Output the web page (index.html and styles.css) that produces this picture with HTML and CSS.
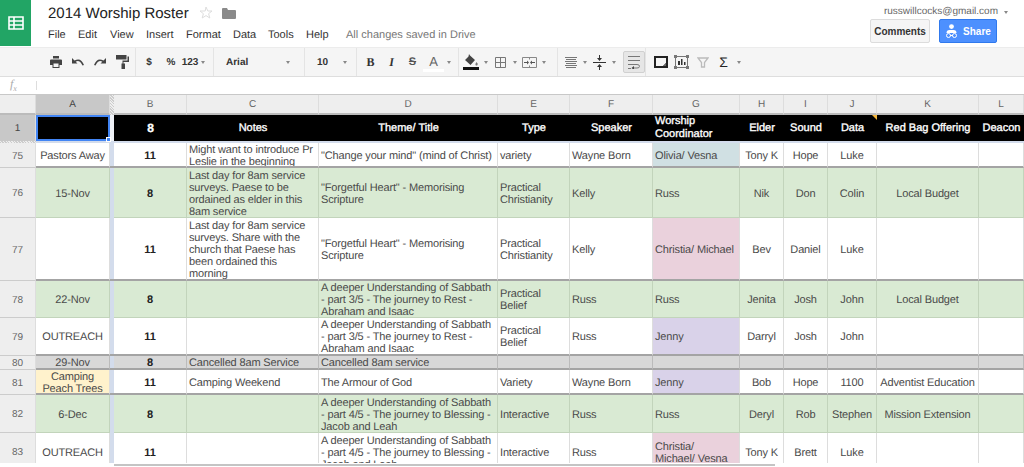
FILE: index.html

```html
<!DOCTYPE html>
<html lang="en">
<head>
    <meta charset="UTF-8">
    <title>2014 Worship Roster</title>
    <link rel="stylesheet" href="styles.css">
</head>
<body>
    <header class="topbar">
        <div class="logo">
            <svg width="16" height="14" viewBox="0 0 16 14"><path fill="none" stroke="#fff" stroke-width="1.6" d="M1 1h14v12H1zM1 5h14M1 9h14M6 1v12"/></svg>
        </div>
        <div class="doc">
            <div class="doc-title">
                <span class="title">2014 Worship Roster</span>
                <svg class="star" width="14" height="14" viewBox="0 0 14 14"><path fill="none" stroke="#ddd" d="M7 1l1.800 4H13L9.600 7.700 10.800 12 7 9.600 3.200 12l1.200-4.300L1 5h5.200z"/></svg>
                <svg class="folder" width="14" height="11" viewBox="0 0 14 11"><path fill="#8a8a8a" d="M0 1q0-1 1-1h4l1 2h7q1 0 1 1v7q0 1-1 1H1q-1 0-1-1z"/></svg>
            </div>
            <nav class="menu">
                <a class="m-file">File</a>
                <a class="m-edit">Edit</a>
                <a class="m-view">View</a>
                <a class="m-insert">Insert</a>
                <a class="m-format">Format</a>
                <a class="m-data">Data</a>
                <a class="m-tools">Tools</a>
                <a class="m-help">Help</a>
                <span class="saved">All changes saved in Drive</span>
            </nav>
        </div>
        <div class="account">
            <div class="email">russwillcocks@gmail.com<i class="caret"></i></div>
            <div class="buttons">
                <button class="btn">Comments</button>
                <button class="btn share">
                    <svg width="13" height="14" viewBox="0 0 13 14"><circle cx="6.500" cy="2.600" r="2.400" fill="#fff"/><path fill="#fff" d="M1.500 9q0-3 3-3h4q3 0 3 3z"/><g fill="none" stroke="#fff"><circle cx="3.500" cy="11.500" r="2"/><circle cx="9.500" cy="11.500" r="2"/></g><path stroke="#fff" d="M5 11.500h3"/></svg>
                    Share
                </button>
            </div>
        </div>
    </header>

    <div class="toolbar">
        <div class="group g-history">
            <span class="tool"><svg width="12" height="12" viewBox="0 0 12 12"><path fill="#444" fill-rule="evenodd" d="M3 0h6v2.500H3zM1 3.500h10q1 0 1 1V9H9.500v3h-7V9H0V4.500q0-1 1-1zM3.500 7.500v3.500h5V7.500z"/></svg></span>
            <span class="tool"><svg width="12" height="8" viewBox="0 0 12 8"><path fill="#444" d="M0 0v5.500h5.500L3.700 3.700Q7.500 1.500 10.500 7.500L12 7Q9-1 2.500 2.500z"/></svg></span>
            <span class="tool"><svg width="12" height="8" viewBox="0 0 12 8"><path fill="#444" d="M12 0v5.500H6.500l1.800-1.800Q4.500 1.500 1.500 7.500L0 7Q3-1 9.500 2.500z"/></svg></span>
            <span class="tool"><svg width="13" height="14" viewBox="0 0 13 14"><path fill="#444" d="M0 0h10.500v4.500H0zM11.500 1.500H13V7H7.500v1.500H9V14H5.500V8.500H6.500V5.500h5z"/></svg></span>
        </div>
        <div class="group g-number">
            <span class="tool txt">$</span>
            <span class="tool txt">%</span>
            <span class="tool txt w16">123</span>
            <i class="caret"></i>
        </div>
        <div class="group g-font">
            <span class="txt">Arial</span>
            <i class="caret"></i>
        </div>
        <div class="group g-size">
            <span class="txt">10</span>
            <i class="caret"></i>
        </div>
        <div class="group g-style">
            <span class="tool w21 serif">B</span>
            <span class="tool w21 serif ital">I</span>
            <span class="tool w21 strike">S</span>
            <span class="tool w21 text-color">A</span>
            <i class="caret"></i>
        </div>
        <div class="group g-cell">
            <span class="tool w20"><svg width="18" height="17" viewBox="0 0 18 17"><path fill="#444" d="M7 0l1 1.500L13 6l-4.500 5L3 6l3.500-3.500z"/><path fill="#777" d="M14.500 8q2 2 1 3t-2 0q-.5-1 1-3z"/><path fill="#111" d="M1 13h16v3H1z"/></svg></span>
            <i class="caret"></i>
            <span class="tool w20"><svg width="11" height="11" viewBox="0 0 11 11"><path fill="none" stroke="#777" d="M.5.5h10v10H.5zM.5 5.500h10M5.500.5v10"/></svg></span>
            <i class="caret"></i>
            <span class="tool w20"><svg width="15" height="11" viewBox="0 0 15 11"><path fill="none" stroke="#888" d="M.5.5h14v10H.5zM7.500.5v2M7.500 8.500v2"/><path fill="#555" d="M2 5h3V3.500L7 5.500 5 7.500V6H2zM13 5h-3V3.500L8 5.500l2 2V6h3z"/></svg></span>
            <i class="caret"></i>
        </div>
        <div class="group g-align">
            <span class="tool w20"><svg width="12" height="11" viewBox="0 0 12 11"><path stroke="#777" d="M0 .5h12M1 2.500h10M0 4.500h12M1 6.500h10M0 8.500h12M1 10.500h10"/></svg></span>
            <i class="caret"></i>
            <span class="tool w20"><svg width="13" height="15" viewBox="0 0 13 15"><path fill="#333" d="M0 7h13v1H0zM6 0h1v3h2L6.500 6 4 3h2zM4 12l2.500-3L9 12H7v3H6v-3z"/></svg></span>
            <i class="caret"></i>
            <span class="wrap-btn"><svg width="12" height="13" viewBox="0 0 12 13"><path stroke="#777" fill="none" d="M0 .5h12M0 4.500h12M0 8.500h9q2.500 0 2.500 1.800T9 12H5M0 12.500h3"/><path fill="#444" d="M6 10v4l-2.500-2z"/></svg></span>
        </div>
        <div class="group g-insert">
            <span class="tool w21"><svg width="14" height="12" viewBox="0 0 14 12"><path fill="#222" fill-rule="evenodd" d="M0 0h14v12H0zM2 2v8h7l3-3V2z"/><path fill="#666" d="M9 10l3-3v3z"/></svg></span>
            <span class="tool w21"><svg width="15" height="14" viewBox="0 0 15 14"><path fill="none" stroke="#777" d="M1.500 1.500h12v11h-12z"/><path fill="#777" d="M0 0h3v3H0zM12 0h3v3h-3zM0 11h3v3H0zM12 11h3v3h-3z"/><path fill="#333" d="M4 6h2v4H4zM7 4h1.500v6H7zM10 7h1.500v3H10z"/></svg></span>
            <span class="tool w21"><svg width="12" height="11" viewBox="0 0 12 11"><path fill="none" stroke="#bbb" stroke-width="1.300" d="M1 1h10L7.500 5.500V10h-3V5.500z"/></svg></span>
            <span class="tool w21 sigma">&Sigma;</span>
            <i class="caret"></i>
        </div>
    </div>

    <div class="formula">
        <span class="fx">f<sub>x</sub></span>
        <span class="fx-sep"></span>
    </div>

    <div class="sheet">
        <div class="row col-heads">
            <div class="corner"></div>
            <div class="ch sel">A</div>
            <div class="gap hatch"></div>
            <div class="ch">B</div><div class="ch">C</div><div class="ch">D</div><div class="ch">E</div><div class="ch">F</div><div class="ch">G</div><div class="ch">H</div><div class="ch">I</div><div class="ch">J</div><div class="ch">K</div><div class="ch">L</div>
        </div>
        <div class="row frozen">
            <div class="rh sel">1</div>
            <div class="c active"><i class="handle"></i></div>
            <div class="gap"></div>
            <div class="c ctr strong">8</div>
            <div class="c ctr">Notes</div>
            <div class="c ctr">Theme/ Title</div>
            <div class="c ctr">Type</div>
            <div class="c ctr">Speaker</div>
            <div class="c">Worship Coordinator</div>
            <div class="c ctr">Elder</div>
            <div class="c ctr">Sound</div>
            <div class="c ctr note">Data</div>
            <div class="c ctr">Red Bag Offering</div>
            <div class="c ctr">Deacon</div>
        </div>
        <div class="freeze-line">
            <div class="hatch"></div>
        </div>
        <div class="rows">
            <div class="row h25 thick">
                <div class="rh">75</div>
                <div class="c ctr">Pastors Away</div>
                <div class="gap"></div>
                <div class="c ctr num">11</div>
                <div class="c">Might want to introduce Pr Leslie in the beginning</div>
                <div class="c">"Change your mind" (mind of Christ)</div>
                <div class="c">variety</div>
                <div class="c">Wayne Born</div>
                <div class="c blue">Olivia/ Vesna</div>
                <div class="c ctr">Tony K</div>
                <div class="c ctr">Hope</div>
                <div class="c ctr">Luke</div>
                <div class="c ctr"></div>
                <div class="c ctr"></div>
            </div>
            <div class="row h50 green">
                <div class="rh">76</div>
                <div class="c ctr">15-Nov</div>
                <div class="gap"></div>
                <div class="c ctr num">8</div>
                <div class="c">Last day for 8am service surveys. Paese to be ordained as elder in this 8am service</div>
                <div class="c">"Forgetful Heart" - Memorising Scripture</div>
                <div class="c">Practical Christianity</div>
                <div class="c">Kelly</div>
                <div class="c">Russ</div>
                <div class="c ctr">Nik</div>
                <div class="c ctr">Don</div>
                <div class="c ctr">Colin</div>
                <div class="c ctr">Local Budget</div>
                <div class="c ctr"></div>
            </div>
            <div class="row h63 thick">
                <div class="rh">77</div>
                <div class="c ctr"></div>
                <div class="gap"></div>
                <div class="c ctr num">11</div>
                <div class="c">Last day for 8am service surveys. Share with the church that Paese has been ordained this morning</div>
                <div class="c">"Forgetful Heart" - Memorising Scripture</div>
                <div class="c">Practical Christianity</div>
                <div class="c">Kelly</div>
                <div class="c pink">Christia/ Michael</div>
                <div class="c ctr">Bev</div>
                <div class="c ctr">Daniel</div>
                <div class="c ctr">Luke</div>
                <div class="c ctr"></div>
                <div class="c ctr"></div>
            </div>
            <div class="row h37 green">
                <div class="rh">78</div>
                <div class="c ctr">22-Nov</div>
                <div class="gap"></div>
                <div class="c ctr num">8</div>
                <div class="c"></div>
                <div class="c">A deeper Understanding of Sabbath - part 3/5 - The journey to Rest - Abraham and Isaac</div>
                <div class="c">Practical Belief</div>
                <div class="c">Russ</div>
                <div class="c">Russ</div>
                <div class="c ctr">Jenita</div>
                <div class="c ctr">Josh</div>
                <div class="c ctr">John</div>
                <div class="c ctr">Local Budget</div>
                <div class="c ctr"></div>
            </div>
            <div class="row h38 thick">
                <div class="rh">79</div>
                <div class="c ctr">OUTREACH</div>
                <div class="gap"></div>
                <div class="c ctr num">11</div>
                <div class="c"></div>
                <div class="c">A deeper Understanding of Sabbath - part 3/5 - The journey to Rest - Abraham and Isaac</div>
                <div class="c">Practical Belief</div>
                <div class="c">Russ</div>
                <div class="c purple">Jenny</div>
                <div class="c ctr">Darryl</div>
                <div class="c ctr">Josh</div>
                <div class="c ctr">John</div>
                <div class="c ctr"></div>
                <div class="c ctr"></div>
            </div>
            <div class="row h14 grey thick">
                <div class="rh">80</div>
                <div class="c ctr">29-Nov</div>
                <div class="gap"></div>
                <div class="c ctr num">8</div>
                <div class="c">Cancelled 8am Service</div>
                <div class="c">Cancelled 8am service</div>
                <div class="c"></div><div class="c"></div><div class="c"></div><div class="c"></div><div class="c"></div><div class="c"></div><div class="c"></div><div class="c"></div>
            </div>
            <div class="row h25 thick">
                <div class="rh">81</div>
                <div class="c ctr yellow">Camping Peach Trees</div>
                <div class="gap"></div>
                <div class="c ctr num">11</div>
                <div class="c">Camping Weekend</div>
                <div class="c">The Armour of God</div>
                <div class="c">Variety</div>
                <div class="c">Wayne Born</div>
                <div class="c purple">Jenny</div>
                <div class="c ctr">Bob</div>
                <div class="c ctr">Hope</div>
                <div class="c ctr">1100</div>
                <div class="c ctr">Adventist Education</div>
                <div class="c ctr"></div>
            </div>
            <div class="row h38 green">
                <div class="rh">82</div>
                <div class="c ctr">6-Dec</div>
                <div class="gap"></div>
                <div class="c ctr num">8</div>
                <div class="c"></div>
                <div class="c">A deeper Understanding of Sabbath - part 4/5 - The journey to Blessing - Jacob and Leah</div>
                <div class="c">Interactive</div>
                <div class="c">Russ</div>
                <div class="c">Russ</div>
                <div class="c ctr">Deryl</div>
                <div class="c ctr">Rob</div>
                <div class="c ctr">Stephen</div>
                <div class="c ctr">Mission Extension</div>
                <div class="c ctr"></div>
            </div>
            <div class="row h38">
                <div class="rh">83</div>
                <div class="c ctr">OUTREACH</div>
                <div class="gap"></div>
                <div class="c ctr num">11</div>
                <div class="c"></div>
                <div class="c">A deeper Understanding of Sabbath - part 4/5 - The journey to Blessing - Jacob and Leah</div>
                <div class="c">Interactive</div>
                <div class="c">Russ</div>
                <div class="c pink"><span>Christia/<br>Michael/ Vesna</span></div>
                <div class="c ctr">Tony K</div>
                <div class="c ctr">Brett</div>
                <div class="c ctr">Luke</div>
                <div class="c ctr"></div>
                <div class="c ctr"></div>
            </div>
        </div>
        <div class="scroll-strip"><div class="scroll-thumb"></div></div>
    </div>
</body>
</html>
```

FILE: styles.css

```css
* {
    box-sizing: border-box;
}
html, body {
    margin: 0;
    height: 467px;
    overflow: hidden;
}
body {
    font-family: "Liberation Sans", Arial, sans-serif;
    text-rendering: geometricPrecision;
    background-color: #fff;
    color: #4a4a4a;
}

/* Top bar */
.topbar {
    display: flex;
    height: 47px;
}
.logo {
    width: 31px;
    height: 46px;
    background-color: #22a565;
    display: flex;
    align-items: center;
    justify-content: center;
}
.doc {
    flex: 1;
    padding-left: 17px;
}
.doc-title {
    display: flex;
    align-items: center;
    height: 26px;
}
.title {
    font-size: 15px;
    color: #222;
}
.star {
    margin-left: 10px;
}
.folder {
    margin-left: 9px;
}
.menu {
    display: flex;
    height: 16px;
    margin-top: 1px;
    align-items: center;
    font-size: 11px;
    color: #333;
}
.menu a {
    display: block;
}
.m-file { width: 30px; }
.m-edit { width: 32px; }
.m-view { width: 36px; }
.m-insert { width: 40px; }
.m-format { width: 47px; }
.m-data { width: 35px; }
.m-tools { width: 38px; }
.m-help { width: 40px; }
.saved {
    color: #777;
}
.account {
    display: flex;
    flex-direction: column;
    align-items: flex-end;
    padding-right: 16px;
}
.email {
    font-size: 10px;
    color: #666;
    height: 19px;
    padding-top: 6px;
    display: flex;
}
.email .caret {
    margin: 5px 0 0 6px;
}
.buttons {
    display: flex;
    gap: 9px;
    margin-right: 11px;
}
.btn {
    height: 24px;
    width: 60px;
    padding: 0;
    font-family: inherit;
    font-size: 10px;
    font-weight: bold;
    color: #333;
    background-color: #f5f5f5;
    border: 1px solid #dcdcdc;
    border-radius: 2px;
}
.share {
    width: 58px;
    display: flex;
    align-items: center;
    justify-content: center;
    gap: 5px;
    color: #fff;
    background-color: #4d90fe;
    border-color: #3079ed;
}
.caret {
    display: inline-block;
    width: 0;
    height: 0;
    border-left: 2.500px solid transparent;
    border-right: 2.500px solid transparent;
    border-top: 3px solid #888;
}

/* Toolbar */
.toolbar {
    display: flex;
    height: 30px;
    background-color: #f5f5f5;
    border-top: 1px solid #ececec;
    border-bottom: 1px solid #dedede;
}
.group {
    display: flex;
    align-items: center;
    height: 28px;
    border-right: 1px solid #e4e4e4;
    font-size: 10px;
    color: #333;
}
.group > .caret {
    margin: 0 2.500px;
}
.tool {
    width: 22px;
    display: flex;
    align-items: center;
    justify-content: center;
}
.w16 { width: 16px; }
.w20 { width: 20px; }
.w21 { width: 21px; }
.txt {
    font-weight: bold;
    font-size: 10px;
}
.g-history { width: 136px; padding-left: 45px; }
.g-number { width: 78px; padding-left: 2px; }
.g-font { width: 91px; padding: 0 12px; justify-content: space-between; }
.g-size { width: 52px; padding: 0 7px 0 12px; justify-content: space-between; }
.g-style { width: 102px; padding-left: 3px; }
.g-cell { width: 99px; padding-left: 2px; }
.g-align { width: 88px; padding-left: 3px; }
.g-insert { border-right: none; padding-left: 4px; }
.serif {
    font-family: "Liberation Serif", serif;
    font-size: 12px;
    font-weight: bold;
}
.ital {
    font-style: italic;
}
.strike {
    font-size: 11px;
    font-weight: bold;
    color: #555;
    text-decoration: line-through;
}
.text-color {
    font-size: 13px;
    color: #666;
    border-bottom: 3px solid #fff;
    height: 17px;
    margin-top: 2px;
}
.sigma {
    font-size: 14px;
    color: #222;
}
.wrap-btn {
    width: 22px;
    height: 22px;
    margin-left: 5px;
    display: flex;
    align-items: center;
    justify-content: center;
    background-color: #e6e6e6;
    border: 1px solid #d0d0d0;
    border-radius: 2px;
}

/* Formula bar */
.formula {
    display: flex;
    align-items: center;
    height: 17px;
}
.fx {
    width: 36px;
    padding-left: 10px;
    font-family: "Liberation Serif", serif;
    font-style: italic;
    font-size: 12px;
    color: #aaa;
}
.fx sub {
    font-size: 8px;
}
.fx-sep {
    width: 1px;
    height: 9px;
    background-color: #ddd;
}

/* Sheet */
.sheet {
    border-top: 1px solid #c8c8c8;
    font-size: 11px;
    letter-spacing: -.15px;
}
.row {
    display: grid;
    grid-template-columns: 36px 74px 4px 73px 132px 179px 72px 83px 87px 44px 44px 49px 102px 45px;
}
.col-heads {
    height: 20px;
}
.corner,
.ch,
.rh {
    background-color: #eee;
    display: flex;
    align-items: center;
    justify-content: center;
    border-right: 1px solid #ddd;
    border-bottom: 1px solid #ccc;
    font-size: 10px;
    font-weight: normal;
    letter-spacing: 0;
    color: #666;
}
.ch,
.corner {
    border-bottom: 2px solid #bbb;
}
.rh.sel,
.ch.sel {
    background-color: #c8c8c8;
    color: #444;
}
.gap {
    background-color: #d3dcec;
}
.hatch {
    background-color: #ddd;
    background-image: repeating-linear-gradient(45deg, #ccc 0, #ccc 1px, #eee 1px, #eee 2px);
}
.frozen {
    height: 26px;
    color: #fff;
    letter-spacing: 0;
    -webkit-text-stroke: .35px #fff;
}
.frozen .c {
    background-color: #000;
    border: none;
    padding: 0 2px;
    line-height: 13px;
    position: relative;
}
.frozen .rh {
    -webkit-text-stroke: 0;
    border-bottom: none;
}
.frozen .gap {
    background-color: #eef1f7;
}
.frozen .strong {
    font-weight: bold;
    font-size: 12px;
}
.frozen .active {
    border: 2px solid #4285f4;
    overflow: visible;
}
.handle {
    position: absolute;
    right: -3px;
    bottom: -3px;
    width: 5px;
    height: 5px;
    background-color: #4285f4;
    border: 1px solid #fff;
}
.note::after {
    content: "";
    position: absolute;
    top: 0;
    right: 0;
    border-top: 5px solid #f6b73c;
    border-left: 5px solid transparent;
}
.freeze-line {
    height: 2px;
    background-color: #d3dcec;
}
.freeze-line .hatch {
    width: 36px;
    height: 2px;
}
.rows {
    height: 320px;
    overflow: hidden;
}
.rows .rh {
    padding-top: 2px;
}
.h14 { height: 14px; }
.h25 { height: 25px; }
.h37 { height: 37px; }
.h38 { height: 38px; }
.h50 { height: 50px; }
.h63 { height: 63px; }
.c {
    display: flex;
    align-items: center;
    padding: 2px 2px 0;
    line-height: 12px;
    overflow: hidden;
    border-right: 1px solid #ddd;
    border-bottom: 1px solid #ddd;
}
.ctr {
    justify-content: center;
    text-align: center;
}
.num {
    font-weight: bold;
    color: #222;
}
.thick .c,
.thick .gap {
    border-bottom: 2px solid #a4a4a4;
}
.thick .rh {
    border-bottom: 1px solid #ccc;
}
.green .c {
    background-color: #d9ead3;
    border-color: #c2d4bb;
}
.grey .c {
    background-color: #d8d8d8;
    border-right-color: #bbb;
}
.blue { background-color: #d0e0e3; }
.pink { background-color: #ead1dc; }
.purple { background-color: #d9d2e9; }
.yellow { background-color: #fff2cc; }
.scroll-strip {
    height: 3px;
    padding: 1px 0 0 114px;
    background-color: #fff;
}
.scroll-thumb {
    height: 2px;
    width: 661px;
    background-color: #c4c4c4;
}
```
